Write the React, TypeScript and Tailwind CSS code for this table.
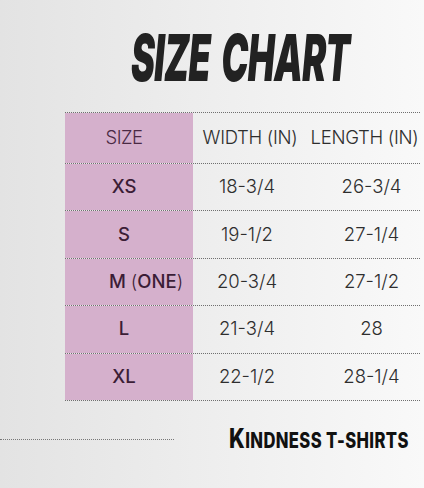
import React from "react";

const rows = [
  { s: "XS", w: "18-3/4", l: "26-3/4" },
  { s: "S", w: "19-1/2", l: "27-1/4" },
  { s: "M (ONE)", w: "20-3/4", l: "27-1/2" },
  { s: "L", w: "21-3/4", l: "28" },
  { s: "XL", w: "22-1/2", l: "28-1/4" },
];

export default function App() {
  return (
    <div
      className="w-[424px] h-[488px] overflow-hidden bg-gradient-to-r from-[#e3e3e3] to-[#f9f9f9] text-[#2a2a2a]"
      style={{ fontFamily: "Inter, 'Liberation Sans', sans-serif" }}
    >
      <div className="h-[112px] pt-[22px] pl-[131px]">
        <div className="inline-block origin-left scale-x-[0.57] scale-y-[1.03] text-[63px] leading-[70px] font-black italic text-[#222] tracking-[-1px] whitespace-nowrap [word-spacing:8px]">
          SIZE CHART
        </div>
      </div>
      <div className="ml-[65px] w-[355px] border-t border-dotted border-[#6f6f6f]">
        <div className="grid grid-cols-[128px_114px_113px] h-[51px] border-b border-dotted border-[#6f6f6f] items-center text-[18.5px] font-light">
          <div className="h-full bg-[#d5b0cc] flex items-center justify-center pr-[10px] text-[#4a2a44] tracking-[-0.5px]">SIZE</div>
          <div className="text-center tracking-[-0.3px] text-[#2e2e2e]">WIDTH (IN)</div>
          <div className="text-center tracking-[-0.3px] text-[#2e2e2e] pl-[2px] whitespace-nowrap">LENGTH (IN)</div>
        </div>
        {rows.map((r) => (
          <div
            key={r.s}
            className="grid grid-cols-[128px_114px_113px] h-[47.4px] border-b border-dotted border-[#6f6f6f] items-center text-[18.5px]"
          >
            <div
              className={
                "h-full bg-[#d5b0cc] flex items-center font-medium text-[#3b1d36] " +
                (r.s === "M (ONE)" ? "justify-start pl-[44px]" : "justify-center pr-[10px]")
              }
            >
              {r.s === "M (ONE)" ? (
                <span>
                  M <span className="font-light">(</span>ONE<span className="font-light">)</span>
                </span>
              ) : (
                r.s
              )}
            </div>
            <div className="text-center pr-[6px] text-[#2e2e2e] font-light">{r.w}</div>
            <div className="text-center pl-[16px] text-[#2e2e2e] font-light">{r.l}</div>
          </div>
        ))}
      </div>
      <div className="flex items-start mt-[24px]">
        <div className="w-[174px] shrink-0 mt-[14px] border-t border-dotted border-[#777]" />
        <div className="ml-[55px] shrink-0 inline-block origin-left scale-x-[0.79] font-extrabold text-[#111] whitespace-nowrap leading-none tracking-[0.5px]">
          <span className="text-[27px]">K</span>
          <span className="text-[21px]">INDNESS T-SHIRTS</span>
        </div>
      </div>
    </div>
  );
}
